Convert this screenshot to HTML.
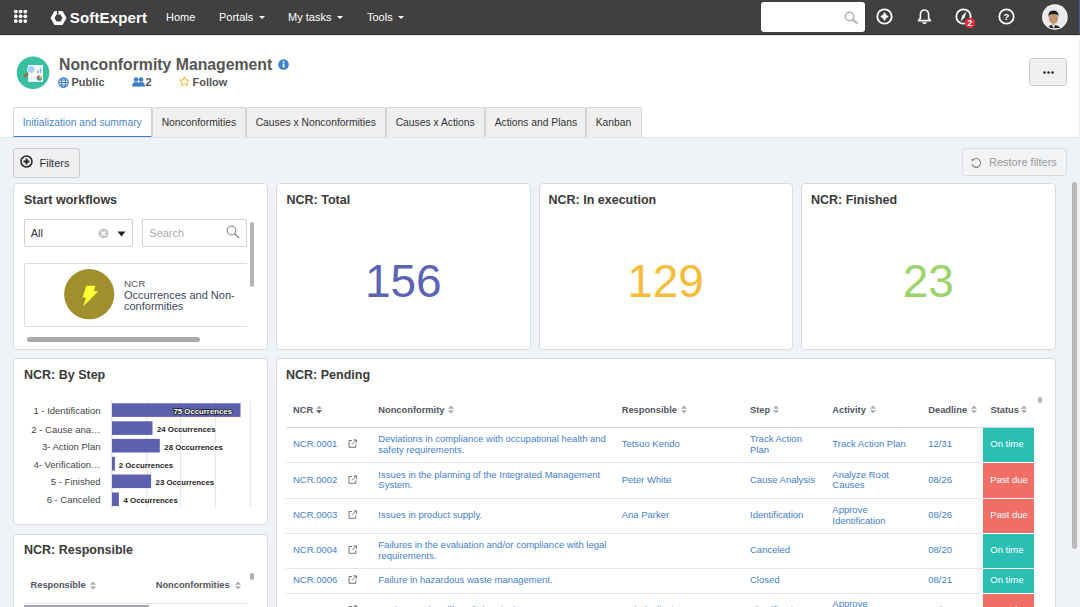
<!DOCTYPE html>
<html><head><meta charset="utf-8">
<style>
*{box-sizing:border-box;margin:0;padding:0}
html,body{width:1080px;height:607px;overflow:hidden;background:#fff;font-family:"Liberation Sans",sans-serif;color:#333}
.abs{position:absolute}
#nav{position:absolute;left:0;top:0;width:1080px;height:35px;background:#404040;border-bottom:1px solid #2f2f2f;box-shadow:0 1px 1.5px rgba(0,0,0,0.12);z-index:2}
.navtxt{position:absolute;top:10px;color:#fff;font-size:11px;line-height:14px;white-space:nowrap}
.caret{display:inline-block;width:0;height:0;border-left:3.3px solid transparent;border-right:3.3px solid transparent;border-top:3.5px solid #fff;vertical-align:middle;margin-left:5.8px;margin-top:-1px}
#content{position:absolute;left:0;top:137px;width:1080px;height:470px;background:#eff2f6;border-top:1px solid #e1e3e7}
.card{position:absolute;background:#fff;border:1px solid #d9dbde;border-radius:4px;overflow:hidden}
.ctitle{position:absolute;left:10px;top:7.8px;font-size:12.5px;font-weight:bold;color:#3a3a3a;white-space:nowrap;line-height:16px}
.tab{position:absolute;top:107px;height:30px;background:#f0f0f0;border:1px solid #d4d4d4;border-bottom:none;font-size:10.3px;color:#333;line-height:30px;padding-left:8.7px;white-space:nowrap;border-radius:2px 2px 0 0}
.btn{position:absolute;background:#f0f0f0;border:1px solid #cfcfcf;border-radius:3px}
.th{font-size:9.3px;font-weight:bold;color:#505560;line-height:11px;white-space:nowrap}
.cell{display:flex;align-items:center;font-size:9.5px;line-height:10.4px;color:#3f80cc;white-space:nowrap}
.big{position:absolute;top:71px;left:0;width:100%;text-align:center;font-size:46px;line-height:52px}
</style></head><body>

<div id="nav">
  <!-- grid icon -->
  <svg class="abs" style="left:14px;top:10px" width="14" height="14" viewBox="0 0 14 14"><g fill="#fff"><circle cx="1.8" cy="1.6" r="1.9"/><circle cx="6.55" cy="1.6" r="1.9"/><circle cx="11.3" cy="1.6" r="1.9"/><circle cx="1.8" cy="6.35" r="1.9"/><circle cx="6.55" cy="6.35" r="1.9"/><circle cx="11.3" cy="6.35" r="1.9"/><circle cx="1.8" cy="11.1" r="1.9"/><circle cx="6.55" cy="11.1" r="1.9"/><circle cx="11.3" cy="11.1" r="1.9"/></g></svg>
  <!-- logo -->
  <svg class="abs" style="left:50px;top:10px" width="17" height="16" viewBox="0 0 17 16">
    <path d="M4.5 1 L12.5 1 L16.5 8 L12.5 15 L4.5 15 L0.5 8 Z M6.5 4.5 L4.5 8 L6.5 11.5 L10.5 11.5 L12.5 8 L10.5 4.5 Z" fill="#fff" fill-rule="evenodd"/><path d="M6.8 0 L8.3 0 L8.6 4.6 L7 4.6 Z" fill="#404040"/>
  </svg>
  <div class="navtxt" style="left:69.8px;top:10.8px;font-size:15px;font-weight:bold;letter-spacing:0.15px">SoftExpert</div>
  <div class="navtxt" style="left:166px">Home</div>
  <div class="navtxt" style="left:219px">Portals<span class="caret"></span></div>
  <div class="navtxt" style="left:288px">My tasks<span class="caret"></span></div>
  <div class="navtxt" style="left:367px">Tools<span class="caret"></span></div>
  <!-- search -->
  <div class="abs" style="left:761px;top:2px;width:104px;height:30px;background:#fff;border-radius:3px"></div>
  <svg class="abs" style="left:844px;top:11px" width="15" height="13" viewBox="0 0 15 13">
    <circle cx="5.5" cy="5.5" r="4.3" fill="none" stroke="#b0b0b0" stroke-width="1.5"/>
    <path d="M8.7 8.7 L13.5 12.5" stroke="#b0b0b0" stroke-width="2"/>
  </svg>
  <!-- icons -->
  <svg class="abs" style="left:875px;top:7.4px" width="19" height="19" viewBox="0 0 19 19">
    <circle cx="9.5" cy="9.5" r="7.2" fill="none" stroke="#fff" stroke-width="1.8"/>
    <path d="M9.5 5.4 Q10.6 8.4 13.3 9.5 Q10.6 10.6 9.5 13.6 Q8.4 10.6 5.7 9.5 Q8.4 8.4 9.5 5.4Z" fill="#fff" stroke="#fff" stroke-width="0.6" stroke-linejoin="round"/>
  </svg>
  <svg class="abs" style="left:915px;top:8.4px" width="19" height="17" viewBox="0 0 19 17">
    <path d="M9.5 2 C6.8 2 5.4 4 5.4 6.8 L5.4 10.3 L3.5 12.6 L15.5 12.6 L13.6 10.3 L13.6 6.8 C13.6 4 12.2 2 9.5 2Z" fill="none" stroke="#fff" stroke-width="1.6" stroke-linejoin="round"/>
    <path d="M7.6 14.2 Q9.5 16.5 11.4 14.2" fill="none" stroke="#fff" stroke-width="1.5"/>
  </svg>
  <svg class="abs" style="left:954px;top:7.4px" width="19" height="19" viewBox="0 0 19 19">
    <circle cx="9.5" cy="9.5" r="7.2" fill="none" stroke="#fff" stroke-width="1.8"/>
    <path d="M12.5 4.5 L10.6 10.6 L6.5 14.5 L8.4 8.4 Z" fill="#fff"/>
  </svg>
  <svg class="abs" style="left:964px;top:17px" width="12" height="12" viewBox="0 0 12 12">
    <circle cx="6" cy="6" r="5.2" fill="#e3273a"/>
    <text x="6" y="9.2" text-anchor="middle" font-family="Liberation Sans" font-weight="bold" font-size="8.8" fill="#fff">2</text>
  </svg>
  <svg class="abs" style="left:997px;top:7.4px" width="19" height="19" viewBox="0 0 19 19">
    <circle cx="9.5" cy="9.5" r="7.2" fill="none" stroke="#fff" stroke-width="1.8"/>
    <text x="9.5" y="13" text-anchor="middle" font-family="Liberation Sans" font-weight="bold" font-size="9.6" fill="#fff">?</text>
  </svg>
  <svg class="abs" style="left:1041px;top:4px" width="27" height="27" viewBox="0 0 27 27">
    <defs><clipPath id="av"><circle cx="13.9" cy="13" r="11.6"/></clipPath></defs>
    <circle cx="13.9" cy="13" r="12.8" fill="#f6f6f7"/>
    <g clip-path="url(#av)">
      <rect x="0" y="0" width="27" height="27" fill="#e9ecef"/>
      <path d="M6 24.5 Q8 21.2 12.3 20.6 Q17 21 19.8 24.5 Z" fill="#2c2c2e"/>
      <path d="M10.8 20.8 L12.6 24.5 L14.4 20.8 Z" fill="#dfe6ec"/>
      <rect x="0" y="24.3" width="27" height="4" fill="#f4f5f6"/>
      <ellipse cx="12.5" cy="14.4" rx="4.5" ry="5.5" fill="#c4946a"/>
      <path d="M7.3 13.5 Q6.8 6.3 12.4 6.4 Q18 6.3 17.6 13 Q17 9.7 12.5 10 Q8 9.7 7.3 13.5Z" fill="#1c1c1c"/>
    </g>
  </svg>
</div>

<!-- header -->
<svg class="abs" style="left:16px;top:56px" width="34" height="34" viewBox="0 0 34 34">
  <circle cx="17" cy="16.8" r="16.3" fill="#38bea0"/>
  <rect x="12.2" y="9" width="14.8" height="16.8" fill="#fff"/>
  <path d="M16.5 21 H20 M16.5 23 H20" stroke="#e6e6e6" stroke-width="1"/>
  <path d="M21.8 17 V14.2 M24.5 17 V12.3" stroke="#5aaee0" stroke-width="1.3"/>
  <circle cx="23.3" cy="22" r="2.6" fill="#3a8fd8"/>
  <path d="M23.3 22 L23.3 19.4 A2.6 2.6 0 0 1 25.9 22Z" fill="#f7c23a"/>
  <path d="M23.3 22 L20.7 22 A2.6 2.6 0 0 1 23.3 19.4Z" fill="#e8503a"/>
  <path d="M23.3 22 L25.9 22 A2.6 2.6 0 0 1 23.3 24.6Z" fill="#4cba6a"/>
  <path d="M11.3 17.8 L8.6 20.2" stroke="#b8603a" stroke-width="2.2" stroke-linecap="round"/>
  <circle cx="15" cy="13.6" r="4.2" fill="#f2f2f2"/>
  <circle cx="15" cy="13.6" r="3.3" fill="#9fd0f4"/>
</svg>
<div class="abs" style="left:59px;top:54.7px;font-size:15.8px;font-weight:bold;color:#555;white-space:nowrap;line-height:19px">Nonconformity Management</div>
<svg class="abs" style="left:278px;top:59px" width="11" height="11" viewBox="0 0 11 11">
  <circle cx="5.5" cy="5.5" r="5.3" fill="#3a7fc8"/>
  <rect x="4.7" y="4.5" width="1.7" height="4" fill="#fff"/><circle cx="5.5" cy="2.9" r="0.9" fill="#fff"/>
</svg>
<svg class="abs" style="left:58px;top:77px" width="11" height="11" viewBox="0 0 11 11">
  <g fill="none" stroke="#3a7fc8" stroke-width="1.1">
    <circle cx="5.5" cy="5.5" r="4.8"/><ellipse cx="5.5" cy="5.5" rx="2" ry="4.8"/><path d="M0.7 5.5 H10.3 M1.5 3 H9.5 M1.5 8 H9.5"/>
  </g>
</svg>
<div class="abs" style="left:71.5px;top:75px;font-size:11px;font-weight:bold;color:#555;line-height:14px">Public</div>
<svg class="abs" style="left:132px;top:77px" width="13" height="10" viewBox="0 0 13 10">
  <g fill="#3a7fc8"><circle cx="4" cy="2.5" r="2.3"/><circle cx="9" cy="2.5" r="2.3"/><path d="M0 9.5 Q0 5 4 5 Q8 5 8 9.5Z"/><path d="M5 9.5 Q5 5 9 5 Q13 5 13 9.5Z"/></g>
</svg>
<div class="abs" style="left:145.5px;top:75px;font-size:11px;font-weight:bold;color:#555;line-height:14px">2</div>
<svg class="abs" style="left:179px;top:76px" width="11" height="11" viewBox="0 0 11 11">
  <path d="M5.5 0.8 L6.9 4 L10.3 4.2 L7.7 6.4 L8.5 9.8 L5.5 8 L2.5 9.8 L3.3 6.4 L0.7 4.2 L4.1 4 Z" fill="none" stroke="#f0b429" stroke-width="1"/>
</svg>
<div class="abs" style="left:192.5px;top:75px;font-size:11px;font-weight:bold;color:#555;line-height:14px">Follow</div>

<div class="btn" style="left:1029px;top:57.6px;width:38.3px;height:28.2px;background:#f0f0f0;border-color:#cfcfcf">
  <svg class="abs" style="left:13.2px;top:12.6px" width="11" height="3" viewBox="0 0 11 3"><g fill="#222"><circle cx="1.5" cy="1.5" r="1.25"/><circle cx="5.5" cy="1.5" r="1.25"/><circle cx="9.5" cy="1.5" r="1.25"/></g></svg>
</div>

<!-- tabs -->
<div class="tab" style="left:13px;width:139px;background:#fff;color:#4a86c8;border-bottom:2px solid #3a7fc8;height:31px">Initialization and summary</div>
<div class="tab" style="left:152px;width:94px">Nonconformities</div>
<div class="tab" style="left:246px;width:140px">Causes x Nonconformities</div>
<div class="tab" style="left:386px;width:99px">Causes x Actions</div>
<div class="tab" style="left:485px;width:101px">Actions and Plans</div>
<div class="tab" style="left:586px;width:56px">Kanban</div>

<div id="content"></div>
<!-- filters -->
<div class="btn" style="left:13px;top:148px;width:67px;height:30px;background:#f0f0f0;border-color:#cdcdcd">
  <svg class="abs" style="left:6.4px;top:6.3px" width="13" height="13" viewBox="0 0 13 13">
    <circle cx="6.5" cy="6.5" r="5.5" fill="none" stroke="#222" stroke-width="1.5"/>
    <path d="M6.5 3.5 V9.5 M3.5 6.5 H9.5" stroke="#222" stroke-width="1.9"/>
  </svg>
  <div class="abs" style="left:25.5px;top:7.7px;font-size:11px;line-height:13px;color:#333">Filters</div>
</div>
<div class="btn" style="left:962px;top:148px;width:105px;height:28px;background:#f2f3f5;border-color:#dcdde0">
  <svg class="abs" style="left:8px;top:8px" width="12" height="12" viewBox="0 0 12 12">
    <path d="M1.6 3.4 A4.4 4.4 0 1 1 0.9 6.8" fill="none" stroke="#8a8a8a" stroke-width="1.15"/>
    <path d="M0.3 1.6 L3.4 2.5 L1 4.6 Z" fill="#8a8a8a"/>
  </svg>
  <div class="abs" style="left:26px;top:7px;font-size:11px;line-height:13px;color:#999">Restore filters</div>
</div>
<!-- page scrollbar -->
<div class="abs" style="left:1072px;top:182.4px;width:5px;height:366.5px;background:#b9b9b9;border-radius:3px"></div>

<!-- Start workflows -->
<div class="card" style="left:13px;top:183px;width:255px;height:167px">
  <div class="ctitle">Start workflows</div>
  <div class="abs" style="left:10px;top:35px;width:109px;height:28px;border:1px solid #d3d3d3;border-radius:2px"></div>
  <div class="abs" style="left:16.7px;top:43.3px;font-size:11px;line-height:13px;color:#333">All</div>
  <svg class="abs" style="left:84px;top:44px" width="11" height="11" viewBox="0 0 11 11"><circle cx="5.5" cy="5.5" r="5" fill="#c8c8c8"/><path d="M3.5 3.5 L7.5 7.5 M7.5 3.5 L3.5 7.5" stroke="#fff" stroke-width="1.3"/></svg>
  <svg class="abs" style="left:103px;top:47px" width="9" height="6" viewBox="0 0 9 6"><path d="M0.5 0.5 H8.5 L4.5 5.5Z" fill="#222"/></svg>
  <div class="abs" style="left:128.2px;top:35px;width:105px;height:28px;border:1px solid #d3d3d3;border-radius:2px"></div>
  <div class="abs" style="left:135.3px;top:42.5px;font-size:11px;line-height:13px;color:#aaa">Search</div>
  <svg class="abs" style="left:212.2px;top:41.3px" width="14" height="14" viewBox="0 0 14 14"><circle cx="5.5" cy="5.5" r="4.3" fill="none" stroke="#999" stroke-width="1.3"/><path d="M8.6 8.6 L13 13" stroke="#999" stroke-width="1.7"/></svg>
  <div class="abs" style="left:236.2px;top:38px;width:4px;height:64.5px;background:#b5b5b5;border-radius:2px"></div>
  <div class="abs" style="left:10.3px;top:79.3px;width:222.3px;height:64px;overflow:hidden"><div class="abs" style="left:0;top:0;width:260px;height:64px;border:1px solid #dcdcdc;border-radius:2px"></div></div>
  <svg class="abs" style="left:49.7px;top:85.3px" width="51" height="51" viewBox="0 0 51 51"><circle cx="25.2" cy="25.2" r="25.1" fill="#a18f2e"/><path d="M22.3 16.7 L31.4 16.7 L29.9 22.1 L34.3 22.3 L19.2 37.6 L21.9 28.7 L18.6 28.3 Z" fill="#ffff33"/></svg>
  <div class="abs" style="left:110px;top:93.8px;font-size:9.8px;line-height:11px;color:#555">NCR</div>
  <div class="abs" style="left:110px;top:106px;font-size:11px;line-height:10.5px;color:#3c4a5c;white-space:nowrap">Occurrences and Non-<br>conformities</div>
  <div class="abs" style="left:13.3px;top:153.4px;width:172.5px;height:4.6px;background:#aaa;border-radius:3px"></div>
</div>

<!-- KPI cards -->
<div class="card" style="left:276px;top:183px;width:254.5px;height:167px">
  <div class="ctitle" style="left:9.5px">NCR: Total</div>
  <div class="big" style="color:#5b63b5">156</div>
</div>
<div class="card" style="left:538.5px;top:183px;width:254px;height:167px">
  <div class="ctitle" style="left:9px">NCR: In execution</div>
  <div class="big" style="color:#f6bd3a">129</div>
</div>
<div class="card" style="left:801px;top:183px;width:254.5px;height:167px">
  <div class="ctitle" style="left:9px">NCR: Finished</div>
  <div class="big" style="color:#9bd46a">23</div>
</div>

<!-- By step -->
<div class="card" style="left:13px;top:358px;width:255px;height:167px">
  <div class="ctitle">NCR: By Step</div>
  <svg class="abs" style="left:0;top:0" width="253" height="165" viewBox="0 0 253 165">
    <g stroke="#e4e4e4" stroke-width="1">
      <path d="M132.9 42 V149 M166.7 42 V149 M201.3 42 V149 M236.3 42 V149"/>
    </g>
    <path d="M97.9 42 V149" stroke="#d0d0d0" stroke-width="1"/>
    <g fill="#5c60ae">
      <rect x="98" y="44.3" width="128.5" height="13.6"/>
      <rect x="98" y="62.3" width="40.5" height="13.6"/>
      <rect x="98" y="79.9" width="47.8" height="13.6"/>
      <rect x="98" y="97.9" width="2.9" height="13.6"/>
      <rect x="98" y="115.5" width="39.1" height="13.6"/>
      <rect x="98" y="133.5" width="6.9" height="13.6"/>
    </g>
    <g font-family="Liberation Sans" font-size="9.5" fill="#444" text-anchor="end">
      <text x="86.5" y="54.8">1 - Identification</text>
      <text x="86.5" y="73.5">2 - Cause ana…</text>
      <text x="86.5" y="90.7">3- Action Plan</text>
      <text x="86.5" y="109">4- Verification…</text>
      <text x="86.5" y="126">5 - Finished</text>
      <text x="86.5" y="144.3">6 - Canceled</text>
    </g>
    <g font-family="Liberation Sans" font-size="7.8" font-weight="bold" fill="#222">
      <text x="218" y="55.0" text-anchor="end" fill="#fff" stroke="#222" stroke-width="1.6" paint-order="stroke">75 Occurrences</text>
      <text x="143" y="73.0">24 Occurrences</text>
      <text x="150.3" y="90.6">28 Occurrences</text>
      <text x="104.8" y="108.6">2 Occurrences</text>
      <text x="141.6" y="126.2">23 Occurrences</text>
      <text x="109.6" y="144.2">4 Occurrences</text>
    </g>
  </svg>
</div>

<!-- Responsible -->
<div class="card" style="left:13px;top:533.5px;width:255px;height:90px">
  <div class="ctitle">NCR: Responsible</div>
  <div class="abs th" style="left:16.5px;top:45.5px">Responsible</div><svg class="abs" style="left:75.5px;top:46.5px" width="6" height="9" viewBox="0 0 6 9"><path d="M0 3.7 L3 0.4 L6 3.7Z" fill="#a9abaf"/><path d="M0 5.3 L3 8.6 L6 5.3Z" fill="#aaa"/></svg>
  <div class="abs th" style="left:141.7px;top:45.5px">Nonconformities</div><svg class="abs" style="left:220.5px;top:46.5px" width="6" height="9" viewBox="0 0 6 9"><path d="M0 3.7 L3 0.4 L6 3.7Z" fill="#a9abaf"/><path d="M0 5.3 L3 8.6 L6 5.3Z" fill="#aaa"/></svg>
  <div class="abs" style="left:236px;top:38.5px;width:4px;height:6.5px;background:#b0b0b0;border-radius:2px"></div>
  <div class="abs" style="left:10px;top:68.5px;width:223px;height:1px;background:#e3e3e3"></div>
  <div class="abs" style="left:10px;top:70px;width:125px;height:10px;background:#a3a5ad"></div>
</div>

<!-- Pending -->
<div class="card" style="left:276px;top:357.8px;width:779.5px;height:270px">
  <div class="ctitle" style="left:9px;top:8.3px">NCR: Pending</div>
<div class="abs" style="left:0.5px;top:0.5px;width:780px;height:270px">
<div class="abs th" style="left:15.5px;top:45.4px;">NCR</div>
<svg class="abs" style="left:38.5px;top:45.7px" width="6" height="9" viewBox="0 0 6 9"><path d="M0 3.7 L3 0.4 L6 3.7Z" fill="#a9abaf"/><path d="M0 5.3 L3 8.6 L6 5.3Z" fill="#555"/></svg>
<div class="abs th" style="left:100.8px;top:45.4px;">Nonconformity</div>
<svg class="abs" style="left:170.0px;top:45.7px" width="6" height="9" viewBox="0 0 6 9"><path d="M0 3.7 L3 0.4 L6 3.7Z" fill="#a9abaf"/><path d="M0 5.3 L3 8.6 L6 5.3Z" fill="#aaa"/></svg>
<div class="abs th" style="left:344.2px;top:45.4px;">Responsible</div>
<svg class="abs" style="left:403.0px;top:45.7px" width="6" height="9" viewBox="0 0 6 9"><path d="M0 3.7 L3 0.4 L6 3.7Z" fill="#a9abaf"/><path d="M0 5.3 L3 8.6 L6 5.3Z" fill="#aaa"/></svg>
<div class="abs th" style="left:472.5px;top:45.4px;">Step</div>
<svg class="abs" style="left:495.0px;top:45.7px" width="6" height="9" viewBox="0 0 6 9"><path d="M0 3.7 L3 0.4 L6 3.7Z" fill="#a9abaf"/><path d="M0 5.3 L3 8.6 L6 5.3Z" fill="#aaa"/></svg>
<div class="abs th" style="left:554.8px;top:45.4px;">Activity</div>
<svg class="abs" style="left:592.5px;top:45.7px" width="6" height="9" viewBox="0 0 6 9"><path d="M0 3.7 L3 0.4 L6 3.7Z" fill="#a9abaf"/><path d="M0 5.3 L3 8.6 L6 5.3Z" fill="#aaa"/></svg>
<div class="abs th" style="left:650.8px;top:45.4px;">Deadline</div>
<svg class="abs" style="left:693px;top:45.7px" width="6" height="9" viewBox="0 0 6 9"><path d="M0 3.7 L3 0.4 L6 3.7Z" fill="#a9abaf"/><path d="M0 5.3 L3 8.6 L6 5.3Z" fill="#aaa"/></svg>
<div class="abs th" style="left:713.0px;top:45.4px;">Status</div>
<svg class="abs" style="left:743.5px;top:45.7px" width="6" height="9" viewBox="0 0 6 9"><path d="M0 3.7 L3 0.4 L6 3.7Z" fill="#a9abaf"/><path d="M0 5.3 L3 8.6 L6 5.3Z" fill="#aaa"/></svg>
<div class="abs" style="left:8.5px;top:67.5px;width:748px;height:1.3px;background:#d9d9d9"></div>
<div class="abs" style="left:8.5px;top:102.9px;width:697px;height:1px;background:#e6e6e6"></div>
<div class="abs" style="left:8.5px;top:138.8px;width:697px;height:1px;background:#e6e6e6"></div>
<div class="abs" style="left:8.5px;top:173.8px;width:697px;height:1px;background:#e6e6e6"></div>
<div class="abs" style="left:8.5px;top:208.8px;width:697px;height:1px;background:#e6e6e6"></div>
<div class="abs" style="left:8.5px;top:233.7px;width:697px;height:1px;background:#e6e6e6"></div>
<div class="abs cell" style="left:15.5px;top:68.3px;height:34.1px;"><span>NCR.0001</span></div>
<svg class="abs" style="left:70.1px;top:80.1px" width="9.5" height="9" viewBox="0 0 9.5 9"><path d="M4 1.5 H1 V8.3 H7.8 V5.3" fill="none" stroke="#666" stroke-width="0.9"/><path d="M4.3 5 L8.4 0.9 M5.5 0.9 H8.6 V4" fill="none" stroke="#666" stroke-width="0.9"/></svg>
<div class="abs cell" style="left:100.8px;top:68.3px;height:34.1px;"><span>Deviations in compliance with occupational health and<br>safety requirements.</span></div>
<div class="abs cell" style="left:344.2px;top:68.3px;height:34.1px;"><span>Tetsuo Kendo</span></div>
<div class="abs cell" style="left:472.5px;top:68.3px;height:34.1px;"><span>Track Action<br>Plan</span></div>
<div class="abs cell" style="left:554.8px;top:68.3px;height:34.1px;"><span>Track Action Plan</span></div>
<div class="abs cell" style="left:650.8px;top:68.3px;height:34.1px;"><span>12/31</span></div>
<div class="abs" style="left:705.5px;top:68.8px;width:51px;height:34.1px;background:#2bbfb3"></div>
<div class="abs cell" style="left:712.8px;top:68.3px;height:34.1px;color:#fff"><span>On time</span></div>
<div class="abs cell" style="left:15.5px;top:103.4px;height:34.9px;"><span>NCR.0002</span></div>
<svg class="abs" style="left:70.1px;top:115.6px" width="9.5" height="9" viewBox="0 0 9.5 9"><path d="M4 1.5 H1 V8.3 H7.8 V5.3" fill="none" stroke="#666" stroke-width="0.9"/><path d="M4.3 5 L8.4 0.9 M5.5 0.9 H8.6 V4" fill="none" stroke="#666" stroke-width="0.9"/></svg>
<div class="abs cell" style="left:100.8px;top:103.4px;height:34.9px;"><span>Issues in the planning of the Integrated Management<br>System.</span></div>
<div class="abs cell" style="left:344.2px;top:103.4px;height:34.9px;"><span>Peter White</span></div>
<div class="abs cell" style="left:472.5px;top:103.4px;height:34.9px;"><span>Cause Analysis</span></div>
<div class="abs cell" style="left:554.8px;top:103.4px;height:34.9px;"><span>Analyze Root<br>Causes</span></div>
<div class="abs cell" style="left:650.8px;top:103.4px;height:34.9px;"><span>08/26</span></div>
<div class="abs" style="left:705.5px;top:103.9px;width:51px;height:34.9px;background:#ef6f67"></div>
<div class="abs cell" style="left:712.8px;top:103.4px;height:34.9px;color:#fff"><span>Past due</span></div>
<div class="abs cell" style="left:15.5px;top:139.3px;height:34.0px;"><span>NCR.0003</span></div>
<svg class="abs" style="left:70.1px;top:151.0px" width="9.5" height="9" viewBox="0 0 9.5 9"><path d="M4 1.5 H1 V8.3 H7.8 V5.3" fill="none" stroke="#666" stroke-width="0.9"/><path d="M4.3 5 L8.4 0.9 M5.5 0.9 H8.6 V4" fill="none" stroke="#666" stroke-width="0.9"/></svg>
<div class="abs cell" style="left:100.8px;top:139.3px;height:34.0px;"><span>Issues in product supply.</span></div>
<div class="abs cell" style="left:344.2px;top:139.3px;height:34.0px;"><span>Ana Parker</span></div>
<div class="abs cell" style="left:472.5px;top:139.3px;height:34.0px;"><span>Identification</span></div>
<div class="abs cell" style="left:554.8px;top:139.3px;height:34.0px;"><span>Approve<br>Identification</span></div>
<div class="abs cell" style="left:650.8px;top:139.3px;height:34.0px;"><span>08/26</span></div>
<div class="abs" style="left:705.5px;top:139.8px;width:51px;height:34.0px;background:#ef6f67"></div>
<div class="abs cell" style="left:712.8px;top:139.3px;height:34.0px;color:#fff"><span>Past due</span></div>
<div class="abs cell" style="left:15.5px;top:174.3px;height:34.0px;"><span>NCR.0004</span></div>
<svg class="abs" style="left:70.1px;top:186.0px" width="9.5" height="9" viewBox="0 0 9.5 9"><path d="M4 1.5 H1 V8.3 H7.8 V5.3" fill="none" stroke="#666" stroke-width="0.9"/><path d="M4.3 5 L8.4 0.9 M5.5 0.9 H8.6 V4" fill="none" stroke="#666" stroke-width="0.9"/></svg>
<div class="abs cell" style="left:100.8px;top:174.3px;height:34.0px;"><span>Failures in the evaluation and/or compliance with legal<br>requirements.</span></div>
<div class="abs cell" style="left:344.2px;top:174.3px;height:34.0px;"><span></span></div>
<div class="abs cell" style="left:472.5px;top:174.3px;height:34.0px;"><span>Canceled</span></div>
<div class="abs cell" style="left:554.8px;top:174.3px;height:34.0px;"><span></span></div>
<div class="abs cell" style="left:650.8px;top:174.3px;height:34.0px;"><span>08/20</span></div>
<div class="abs" style="left:705.5px;top:174.8px;width:51px;height:34.0px;background:#2bbfb3"></div>
<div class="abs cell" style="left:712.8px;top:174.3px;height:34.0px;color:#fff"><span>On time</span></div>
<div class="abs cell" style="left:15.5px;top:209.3px;height:23.9px;"><span>NCR.0006</span></div>
<svg class="abs" style="left:70.1px;top:216.0px" width="9.5" height="9" viewBox="0 0 9.5 9"><path d="M4 1.5 H1 V8.3 H7.8 V5.3" fill="none" stroke="#666" stroke-width="0.9"/><path d="M4.3 5 L8.4 0.9 M5.5 0.9 H8.6 V4" fill="none" stroke="#666" stroke-width="0.9"/></svg>
<div class="abs cell" style="left:100.8px;top:209.3px;height:23.9px;"><span>Failure in hazardous waste management.</span></div>
<div class="abs cell" style="left:344.2px;top:209.3px;height:23.9px;"><span></span></div>
<div class="abs cell" style="left:472.5px;top:209.3px;height:23.9px;"><span>Closed</span></div>
<div class="abs cell" style="left:554.8px;top:209.3px;height:23.9px;"><span></span></div>
<div class="abs cell" style="left:650.8px;top:209.3px;height:23.9px;"><span>08/21</span></div>
<div class="abs" style="left:705.5px;top:209.8px;width:51px;height:23.9px;background:#2bbfb3"></div>
<div class="abs cell" style="left:712.8px;top:209.3px;height:23.9px;color:#fff"><span>On time</span></div>
<div class="abs cell" style="left:15.5px;top:234.2px;height:32.8px;"><span>NCR.0007</span></div>
<svg class="abs" style="left:70.1px;top:245.3px" width="9.5" height="9" viewBox="0 0 9.5 9"><path d="M4 1.5 H1 V8.3 H7.8 V5.3" fill="none" stroke="#666" stroke-width="0.9"/><path d="M4.3 5 L8.4 0.9 M5.5 0.9 H8.6 V4" fill="none" stroke="#666" stroke-width="0.9"/></svg>
<div class="abs cell" style="left:100.8px;top:234.2px;height:32.8px;"><span>Inadequate handling of chemicals.</span></div>
<div class="abs cell" style="left:344.2px;top:234.2px;height:32.8px;"><span>Isabel Oliveira</span></div>
<div class="abs cell" style="left:472.5px;top:234.2px;height:32.8px;"><span>Identification</span></div>
<div class="abs cell" style="left:554.8px;top:234.2px;height:32.8px;"><span>Approve<br>Identification</span></div>
<div class="abs cell" style="left:650.8px;top:234.2px;height:32.8px;"><span>08/26</span></div>
<div class="abs" style="left:705.5px;top:234.7px;width:51px;height:32.8px;background:#ef6f67"></div>
<div class="abs cell" style="left:712.8px;top:234.2px;height:32.8px;color:#fff"><span>Past due</span></div>
<div class="abs" style="left:760.0px;top:37.69999999999999px;width:4.2px;height:6.5px;background:#b0b0b0;border-radius:2px"></div>
</div>
</div>


<div class="abs" style="left:1079px;top:0;width:1px;height:34px;background:#3e5f92;z-index:3"></div>
<div class="abs" style="left:1079px;top:40px;width:1px;height:97px;background:#ececec"></div>
</body></html>
